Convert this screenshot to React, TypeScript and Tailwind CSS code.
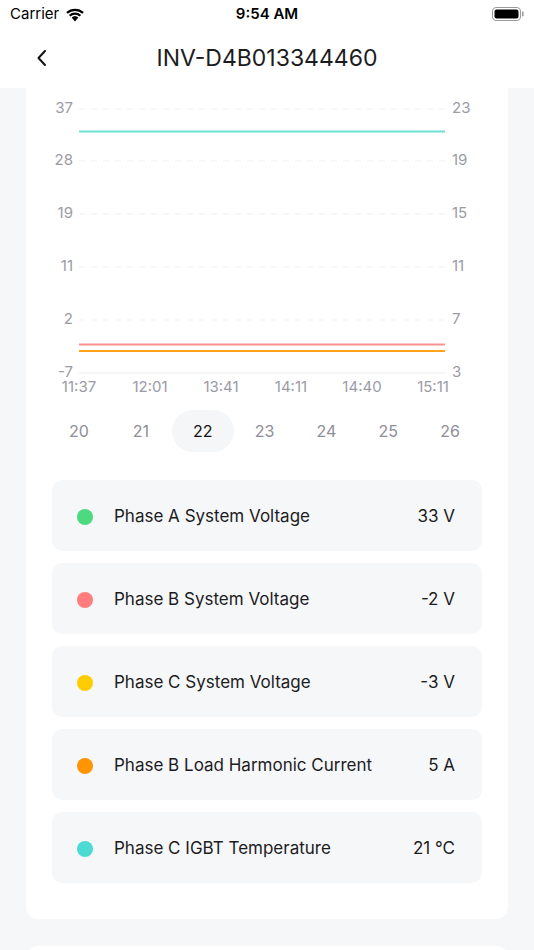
import React from "react";

const leftTicks = ["37", "28", "19", "11", "2", "-7"];
const rightTicks = ["23", "19", "15", "11", "7", "3"];
const gridY = [21, 73, 126, 179, 232, 285];
const times = [
  { t: "11:37", x: 53 },
  { t: "12:01", x: 124 },
  { t: "13:41", x: 195 },
  { t: "14:11", x: 265 },
  { t: "14:40", x: 336 },
  { t: "15:11", x: 407 },
];
const days = ["20", "21", "22", "23", "24", "25", "26"];

const rows = [
  { name: "Phase A System Voltage", value: "33 V", dot: "bg-[#4cd97f]" },
  { name: "Phase B System Voltage", value: "-2 V", dot: "bg-[#ff7d7d]" },
  { name: "Phase C System Voltage", value: "-3 V", dot: "bg-[#ffcc00]" },
  { name: "Phase B Load Harmonic Current", value: "5 A", dot: "bg-[#ff9500]" },
  { name: "Phase C IGBT Temperature", value: "21 °C", dot: "bg-[#4cdad2]" },
];

function StatusBar() {
  return (
    <div className="relative flex h-[28px] items-center justify-between px-[10px] text-[15px] text-black">
      <div className="flex items-center gap-[6px]">
        <span>Carrier</span>
        <svg width="20" height="15" viewBox="0 0 20 15">
          <path d="M10 14.5 L6.6 10.6 A5 5 0 0 1 13.4 10.6 Z" fill="#000" />
          <path d="M3.9 7.9 A9 9 0 0 1 16.1 7.9 L14.6 9.6 A6.8 6.8 0 0 0 5.4 9.6 Z" fill="#000" />
          <path d="M1.2 5.1 A13 13 0 0 1 18.8 5.1 L17.3 6.8 A10.8 10.8 0 0 0 2.7 6.8 Z" fill="#000" />
        </svg>
      </div>
      <span className="absolute left-1/2 -translate-x-1/2 font-semibold">9:54 AM</span>
      <svg width="32" height="14" viewBox="0 0 32 14">
        <rect x="0.5" y="0.5" width="28" height="13" rx="3.5" fill="none" stroke="#9a9a9a" />
        <rect x="2.5" y="2.5" width="24" height="9" rx="2" fill="#000" />
        <rect x="30" y="4.5" width="1.6" height="5" rx="0.8" fill="#9a9a9a" />
      </svg>
    </div>
  );
}

function Header() {
  return (
    <div className="relative flex h-[60px] items-center justify-center bg-white">
      <svg
        className="absolute left-[36px] top-[21px]"
        width="11"
        height="18"
        viewBox="0 0 11 18"
      >
        <path d="M9 2 L2.5 9 L9 16" fill="none" stroke="#111" strokeWidth="2" strokeLinecap="round" strokeLinejoin="round" />
      </svg>
      <span className="text-[23px] text-[#1c1c1e]">INV-D4B013344460</span>
    </div>
  );
}

function Chart() {
  return (
    <svg width="482" height="312" viewBox="0 0 482 312" className="block">
      {gridY.map((y, i) => (
        <line
          key={y}
          x1="53"
          x2="419"
          y1={y}
          y2={y}
          stroke={i === gridY.length - 1 ? "#ececee" : "#efeff1"}
          strokeWidth="1"
          strokeDasharray={i === gridY.length - 1 ? undefined : "6 6"}
        />
      ))}
      {leftTicks.map((t, i) => (
        <text
          key={"l" + t}
          x="47"
          y={gridY[i]}
          textAnchor="end"
          dominantBaseline="middle"
          fontSize="15"
          fill="#9b9ba6"
        >
          {t}
        </text>
      ))}
      {rightTicks.map((t, i) => (
        <text
          key={"r" + t + i}
          x="426"
          y={gridY[i]}
          dominantBaseline="middle"
          fontSize="15"
          fill="#9b9ba6"
        >
          {t}
        </text>
      ))}
      <line x1="53" x2="419" y1="43.5" y2="43.5" stroke="#6fe0d6" strokeWidth="2" />
      <line x1="53" x2="419" y1="256.5" y2="256.5" stroke="#ff8f8f" strokeWidth="2" />
      <line x1="53" x2="419" y1="263" y2="263" stroke="#ffa31a" strokeWidth="2" />
      {times.map((d) => (
        <text
          key={d.t}
          x={d.x}
          y="300"
          textAnchor="middle"
          dominantBaseline="middle"
          fontSize="15"
          fill="#9b9ba6"
        >
          {d.t}
        </text>
      ))}
    </svg>
  );
}

export default function App() {
  return (
    <div
      className="h-[950px] w-[534px] overflow-hidden bg-[#f6f7f9]"
      style={{ fontFamily: "Inter, 'Noto Sans', sans-serif" }}
    >
      <div className="bg-white">
        <StatusBar />
        <Header />
      </div>
      <div className="mx-[26px] rounded-b-[12px] bg-white pb-[36px]">
        <Chart />
        <div className="ml-[22px] mt-[10px] grid w-[433px] grid-cols-7">
          {days.map((d) => (
            <div
              key={d}
              className={
                d === "22"
                  ? "flex h-[42px] items-center justify-center rounded-full bg-[#f5f6f8] text-[16px] text-[#111]"
                  : "flex h-[42px] items-center justify-center text-[16px] text-[#8e8e98]"
              }
            >
              {d}
            </div>
          ))}
        </div>
        <div className="mt-[28px] flex flex-col gap-[12px] px-[26px]">
          {rows.map((r) => (
            <div
              key={r.name}
              className="flex h-[71px] items-center rounded-[10px] bg-[#f6f7f9] pl-[25px] pr-[27px] pt-[2px]"
            >
              <span className={"h-[16px] w-[16px] rounded-full " + r.dot} />
              <span className="ml-[21px] flex-1 text-[17px] text-[#1c1c1e]">{r.name}</span>
              <span className="text-[17px] text-[#1c1c1e]">{r.value}</span>
            </div>
          ))}
        </div>
      </div>
      <div className="mx-[26px] mt-[27px] h-[40px] rounded-t-[12px] bg-white" />
    </div>
  );
}
